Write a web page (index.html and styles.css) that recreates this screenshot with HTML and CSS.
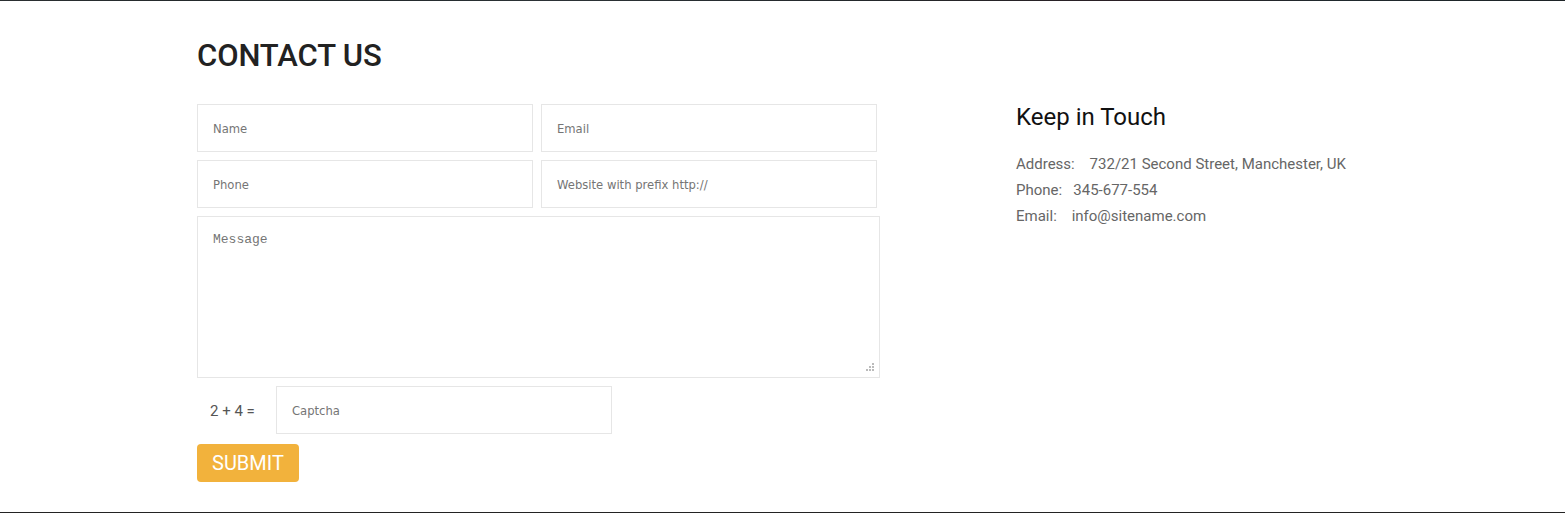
FILE: index.html
```html
<!DOCTYPE html>
<html lang="en">
<head>
<meta charset="utf-8">
<title>Contact Us</title>
<link rel="stylesheet" href="styles.css">
</head>
<body>
<div class="page">
  <div class="topline"></div>
  <section class="contact">
    <div class="form-col">
      <h2 class="title">CONTACT US</h2>
      <form class="form">
        <div class="row">
          <input class="field" type="text" placeholder="Name">
          <input class="field" type="text" placeholder="Email">
        </div>
        <div class="row">
          <input class="field" type="text" placeholder="Phone">
          <input class="field" type="text" placeholder="Website with prefix http://">
        </div>
        <div class="message-wrap">
          <textarea class="message" placeholder="Message"></textarea>
        </div>
        <div class="captcha">
          <span class="captcha-label">2 + 4 =</span>
          <input class="field captcha-field" type="text" placeholder="Captcha">
        </div>
        <button class="submit" type="button">SUBMIT</button>
      </form>
    </div>
    <div class="info-col">
      <h3 class="info-title">Keep in Touch</h3>
      <ul class="info-list">
        <li>Address:&nbsp;&nbsp;&nbsp; 732/21 Second Street, Manchester, UK</li>
        <li>Phone:&nbsp;&nbsp; 345-677-554</li>
        <li>Email:&nbsp;&nbsp;&nbsp; info@sitename.com</li>
      </ul>
    </div>
  </section>
</div>
</body>
</html>
```

FILE: styles.css
```css
* {
  box-sizing: border-box;
}

html, body {
  margin: 0;
  padding: 0;
  background: #ffffff;
}

.page {
  height: 513px;
  border-bottom: 1px solid #232323;
  display: flex;
  flex-direction: column;
}

.topline {
  height: 1px;
  background: linear-gradient(90deg, #2b2f31 0%, #1f2628 20%, #2c3236 35%, #23282b 55%, #2a1f24 72%, #20292d 85%, #1d2327 100%);
}

.contact {
  display: flex;
  padding-left: 197px;
  gap: 136px;
  font-family: Roboto, "Liberation Sans", sans-serif;
}

.form-col {
  width: 683px;
}

.title {
  margin: 0;
  padding-top: 38px;
  height: 71px;
  font-size: 31px;
  line-height: 33px;
  font-weight: 500;
  color: #222222;
  letter-spacing: -0.1px;
}

.form {
  margin-top: 32px;
  display: flex;
  flex-direction: column;
  align-items: flex-start;
  gap: 8px;
}

.row {
  display: flex;
  gap: 8px;
}

.field {
  width: 336px;
  height: 48px;
  border: 1px solid #e6e6e6;
  border-radius: 0;
  padding: 2px 15px 0;
  font-family: "DejaVu Sans", Verdana, sans-serif;
  font-size: 11.6px;
  color: #555555;
  background: #ffffff;
  outline: none;
}

.field::placeholder {
  color: #757575;
}

.message-wrap {
  position: relative;
  width: 683px;
  height: 162px;
}

.message-wrap::after {
  content: "";
  position: absolute;
  right: 6px;
  bottom: 7px;
  width: 2px;
  height: 2px;
  background: #bbbbbb;
  box-shadow: 0 -3px 0 #bbbbbb, -3px -3px 0 #bbbbbb, -3px 0 0 #bbbbbb, -6px 0 0 #bbbbbb, 0 -6px 0 #bbbbbb;
  pointer-events: none;
}

.message {
  width: 100%;
  height: 100%;
  border: 1px solid #e6e6e6;
  border-radius: 0;
  padding: 15px 15px;
  font-family: "Liberation Mono", monospace;
  font-size: 13px;
  color: #555555;
  outline: none;
  margin: 0;
  display: block;
  resize: none;
}

.message::placeholder {
  color: #757575;
}

.captcha {
  display: flex;
  align-items: center;
}

.captcha-label {
  width: 79px;
  padding-left: 13px;
  padding-top: 2px;
  font-size: 15px;
  color: #555555;
}

.submit {
  margin-top: 2px;
  height: 38px;
  padding: 0 15px;
  border: none;
  border-radius: 4px;
  background: #f2b23c;
  color: #ffffff;
  font-family: Roboto, "Liberation Sans", sans-serif;
  font-size: 20px;
  line-height: 38px;
  cursor: pointer;
}

.info-col {
  padding-top: 104px;
}

.info-title {
  margin: 0;
  font-size: 24px;
  line-height: 24px;
  font-weight: 400;
  color: #111111;
}

.info-list {
  list-style: none;
  margin: 22px 0 0;
  padding: 0;
  font-size: 15px;
  line-height: 26px;
  color: #666666;
}
```
